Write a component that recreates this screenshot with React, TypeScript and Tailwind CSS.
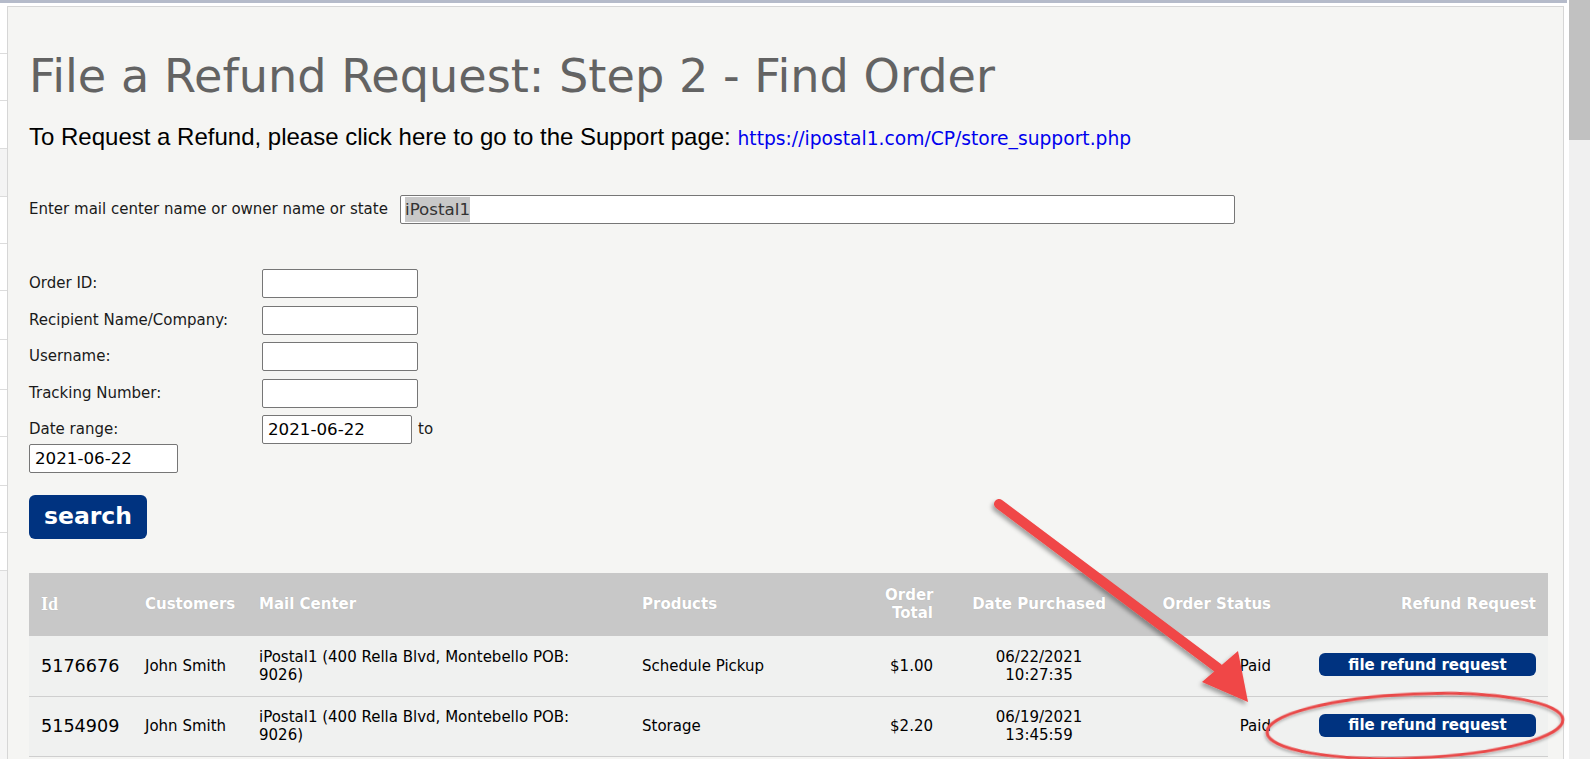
import React from "react";

function Sidebar() {
  const boxes: { h: string; white: boolean }[] = [
    { h: "h-[48px]", white: true },
    { h: "h-[47px]", white: true },
    { h: "h-[48px]", white: true },
    { h: "h-[48px]", white: false },
    { h: "h-[47px]", white: true },
    { h: "h-[47px]", white: true },
    { h: "h-[49px]", white: true },
    { h: "h-[50px]", white: true },
    { h: "h-[47px]", white: true },
    { h: "h-[49px]", white: true },
    { h: "h-[47px]", white: true },
    { h: "h-[38px]", white: true },
  ];
  return (
    <div className="flex w-[7px] flex-col">
      {boxes.map((b, i) => (
        <div
          key={i}
          className={
            b.h +
            " w-full border-b border-[#dcdcdc] " +
            (b.white ? "bg-white" : "bg-[#f4f4f4]")
          }
        />
      ))}
      <div className="flex-1 bg-[#f5f5f5]" />
    </div>
  );
}

function Field({ w }: { w: string }) {
  return (
    <div
      className={
        w +
        " h-[29px] rounded-[2px] border border-[#767676] bg-white"
      }
    />
  );
}

function DateField({ w, value }: { w: string; value: string }) {
  return (
    <div
      className={
        w +
        " flex h-[29px] items-center rounded-[2px] border border-[#767676] bg-white pl-[5px] text-[16.7px] text-black"
      }
    >
      {value}
    </div>
  );
}

function RefundButton() {
  return (
    <div className="inline-flex h-[23px] w-[217px] items-center justify-center rounded-[6px] bg-[#003380] text-[15px] font-bold text-white">
      file refund request
    </div>
  );
}

export default function App() {
  const rows = [
    {
      id: "5176676",
      customer: "John Smith",
      product: "Schedule Pickup",
      total: "$1.00",
      date: "06/22/2021",
      time: "10:27:35",
    },
    {
      id: "5154909",
      customer: "John Smith",
      product: "Storage",
      total: "$2.20",
      date: "06/19/2021",
      time: "13:45:59",
    },
  ];

  return (
    <div className="relative h-[759px] w-[1590px] overflow-hidden bg-white font-['DejaVu_Sans',sans-serif]">
      <div className="flex h-full">
        <div className="flex w-[1569px] flex-col">
          <div className="h-[3px] w-[1567px] bg-[#b5bbca]" />
          <div className="h-[3px] bg-white" />
          <div className="flex min-h-0 flex-1">
            <Sidebar />
            <main className="flex-1 border-l border-r border-t border-[#d6d6d6] bg-[#f5f5f3] pl-[21px]">
              <h1 className="mt-[42px] text-[46.2px] font-normal leading-[54px] text-[#636363]">
                File a Refund Request: Step 2 - Find Order
              </h1>
              <p className="mt-[20px] font-['Liberation_Sans',Arial,sans-serif] text-[24px] leading-[28px] text-black">
                To Request a Refund, please click here to go to the Support
                page:{" "}
                <a className="font-['DejaVu_Sans',sans-serif] text-[18.7px] text-[#0000ee]">
                  https://ipostal1.com/CP/store_support.php
                </a>
              </p>

              <div className="mt-[42px] flex h-[29px] items-center text-[15px] text-[#1a1a1a]">
                <div className="w-[371px]">
                  Enter mail center name or owner name or state
                </div>
                <div className="flex h-[29px] w-[835px] items-center rounded-[2px] border border-[#767676] bg-white pl-[4px] text-[16.7px]">
                  <span className="bg-[#c8c8c8] text-[#333]">iPostal1</span>
                </div>
              </div>

              <div className="mt-[45px] flex flex-col gap-[7.5px] text-[15px] text-[#1a1a1a]">
                <div className="flex h-[29px] items-center">
                  <div className="w-[233px]">Order ID:</div>
                  <Field w="w-[156px]" />
                </div>
                <div className="flex h-[29px] items-center">
                  <div className="w-[233px]">Recipient Name/Company:</div>
                  <Field w="w-[156px]" />
                </div>
                <div className="flex h-[29px] items-center">
                  <div className="w-[233px]">Username:</div>
                  <Field w="w-[156px]" />
                </div>
                <div className="flex h-[29px] items-center">
                  <div className="w-[233px]">Tracking Number:</div>
                  <Field w="w-[156px]" />
                </div>
                <div className="flex h-[29px] items-center">
                  <div className="w-[233px]">Date range:</div>
                  <DateField w="w-[150px]" value="2021-06-22" />
                  <span className="ml-[6px]">to</span>
                </div>
              </div>
              <div className="flex">
                <DateField w="w-[149px]" value="2021-06-22" />
              </div>

              <div className="mt-[22px] flex h-[44px] w-[118px] items-center justify-center rounded-[6px] bg-[#003380] text-[23.5px] font-bold text-white">
                search
              </div>

              <table className="mt-[34px] w-[1519px] table-fixed border-collapse">
                <colgroup>
                  <col className="w-[104px]" />
                  <col className="w-[114px]" />
                  <col className="w-[383px]" />
                  <col className="w-[243px]" />
                  <col className="w-[72px]" />
                  <col className="w-[188px]" />
                  <col className="w-[150px]" />
                  <col className="w-[265px]" />
                </colgroup>
                <thead>
                  <tr className="h-[63px] bg-[#c8c8c8] text-[15px] font-bold text-white [text-shadow:0_0_1px_rgba(0,0,0,0.15)]">
                    <th className="px-[12px] pb-[1px] text-left font-['Liberation_Serif',serif] text-[18px]">
                      Id
                    </th>
                    <th className="px-[12px] pb-[1px] text-left">Customers</th>
                    <th className="px-[12px] pb-[1px] text-left">Mail Center</th>
                    <th className="px-[12px] pb-[1px] text-left">Products</th>
                    <th className="px-[12px] pb-[1px] text-right leading-[18px]">
                      Order
                      <br />
                      Total
                    </th>
                    <th className="px-[12px] pb-[1px] text-center">
                      Date Purchased
                    </th>
                    <th className="px-[12px] pb-[1px] text-right">
                      Order Status
                    </th>
                    <th className="px-[12px] pb-[1px] text-right">
                      Refund Request
                    </th>
                  </tr>
                </thead>
                <tbody>
                  {rows.map((r) => (
                    <tr
                      key={r.id}
                      className="h-[60px] border-b border-[#cfcfcf] bg-[#f0f1f0] text-[15px] leading-[18px] text-black"
                    >
                      <td className="px-[12px] text-[17.6px]">{r.id}</td>
                      <td className="px-[12px]">{r.customer}</td>
                      <td className="px-[12px]">
                        iPostal1 (400 Rella Blvd, Montebello POB:
                        <br />
                        9026)
                      </td>
                      <td className="px-[12px]">{r.product}</td>
                      <td className="px-[12px] text-right">{r.total}</td>
                      <td className="px-[12px] text-center">
                        {r.date}
                        <br />
                        {r.time}
                      </td>
                      <td className="px-[12px] text-right">Paid</td>
                      <td className="px-[12px] pb-[2px] text-right">
                        <RefundButton />
                      </td>
                    </tr>
                  ))}
                </tbody>
              </table>
            </main>
            <div className="w-[5px] bg-white" />
          </div>
        </div>
        <div className="flex w-[21px] flex-col bg-[#f0f0f0]">
          <div className="h-[140px] bg-[#c1c1c1]" />
        </div>
      </div>

      <svg
        className="pointer-events-none absolute left-0 top-0"
        width="1590"
        height="759"
        viewBox="0 0 1590 759"
      >
        <defs>
          <filter id="arrowShadow" x="-20%" y="-20%" width="140%" height="140%">
            <feDropShadow
              dx="-2"
              dy="3"
              stdDeviation="2"
              floodColor="#000"
              floodOpacity="0.35"
            />
          </filter>
          <filter id="ringShadow" x="-10%" y="-30%" width="120%" height="160%">
            <feDropShadow
              dx="-1"
              dy="2"
              stdDeviation="1.5"
              floodColor="#000"
              floodOpacity="0.3"
            />
          </filter>
        </defs>
        <g filter="url(#arrowShadow)">
          <line
            x1="999"
            y1="504"
            x2="1218"
            y2="668"
            stroke="#f04646"
            strokeWidth="10"
            strokeLinecap="round"
          />
          <polygon points="1248,702 1202,682 1238,651" fill="#f04646" />
        </g>
        <ellipse
          cx="1415"
          cy="726"
          rx="148"
          ry="32"
          fill="none"
          stroke="#e94a4a"
          strokeWidth="3"
          transform="rotate(-2.5 1415 726)"
          filter="url(#ringShadow)"
        />
      </svg>
    </div>
  );
}
